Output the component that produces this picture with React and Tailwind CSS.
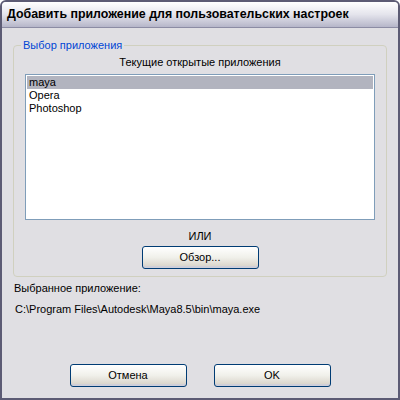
export default function App() {
  const apps = ["maya", "Opera", "Photoshop"];
  const btn =
    "h-[23px] rounded-[3px] border border-[#003c74] bg-gradient-to-b from-white via-[#f0f0ea] to-[#d6d0c5] text-[11px] text-black shadow-[inset_0_-2px_0_#cfcfd9]";

  return (
    <div
      className="w-[400px] h-[400px] bg-white"
      style={{ fontFamily: '"Liberation Sans", Arial, sans-serif' }}
    >
      <div className="w-full h-full border-[2px] border-[#5c5b74] rounded-t-[6px] flex flex-col bg-[#e0dfe3] overflow-hidden">
        {/* Title bar */}
        <div className="h-[26px] shrink-0 flex items-center px-[5px] bg-gradient-to-b from-white via-[#e4e4ec] to-[#b6b6c9] border-b border-[#8c8ca4]">
          <span className="text-[12.4px] font-bold text-black">
            Добавить приложение для пользовательских настроек
          </span>
        </div>

        {/* Body */}
        <div className="flex-1 flex flex-col px-[11px] pt-[11px]">
          <fieldset className="border border-[#d0d0bf] rounded-[4px] px-[11px] pb-[7px] pt-0 m-0">
            <legend className="px-[2px] ml-[-4px] text-[11px] text-[#0046d5] leading-[13px]">
              Выбор приложения
            </legend>
            <div className="text-center text-[11px] leading-[13px] mt-[4px]">
              Текущие открытые приложения
            </div>
            <div className="mt-[5px] h-[146px] bg-white border border-[#7f9db9] p-[1px]">
              {apps.map((a, i) => (
                <div
                  key={a}
                  className={
                    "h-[13px] leading-[13px] px-[2px] text-[11px] " +
                    (i === 0 ? "bg-[#b2b4bf]" : "")
                  }
                >
                  {a}
                </div>
              ))}
            </div>
            <div className="text-center text-[11px] leading-[13px] mt-[10px]">ИЛИ</div>
            <div className="flex justify-center mt-[3px]">
              <button className={btn + " w-[117px]"}>Обзор...</button>
            </div>
          </fieldset>

          <div className="text-[11px] leading-[13px] mt-[5px] ml-[1px]">Выбранное приложение:</div>
          <div className="text-[11px] leading-[13px] mt-[8px] ml-[2px]">
            C:\Program Files\Autodesk\Maya8.5\bin\maya.exe
          </div>

          <div className="flex-1" />
          <div className="flex justify-center gap-[27px] pb-[11px]">
            <button className={btn + " w-[117px]"}>Отмена</button>
            <button className={btn + " w-[117px]"}>OK</button>
          </div>
        </div>
      </div>
    </div>
  );
}
